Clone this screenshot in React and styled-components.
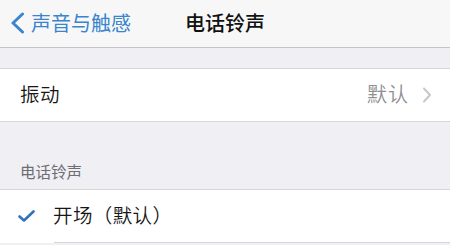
import React from "react";
import styled, { createGlobalStyle } from "styled-components";

const Global = createGlobalStyle`
  html, body { margin: 0; padding: 0; background: #efeff4; }
  body { font-family: "Noto Sans CJK SC", "Noto Sans", sans-serif; -webkit-font-smoothing: antialiased; }
`;

const Page = styled.div`
  width: 450px;
  height: 245px;
  overflow: hidden;
  background: #efeff4;
`;

const NavBar = styled.div`
  height: 47px;
  background: #f7f7f8;
  border-bottom: 1px solid #c4c4c8;
  display: grid;
  grid-template-columns: 1fr auto 1fr;
  align-items: center;
`;

const Back = styled.div`
  display: flex;
  align-items: center;
  gap: 6px;
  padding-left: 9px;
  color: #3a85cc;
  font-size: 20px;
  line-height: 1;
  margin-top: -2px;
`;

const Title = styled.div`
  font-size: 20px;
  font-weight: 500;
  color: #111;
  margin-top: -3px;
`;

const Spacer = styled.div`
  height: ${p => p.h}px;
`;

const Group = styled.div`
  background: #fff;
  border-top: 1px solid #d6d6da;
  border-bottom: ${p => (p.open ? "none" : "1px solid #d6d6da")};
`;

const Row = styled.div`
  height: 52px;
  box-sizing: border-box;
  display: flex;
  align-items: center;
  padding: 0 18px 3px 20px;
  font-size: 19.5px;
  font-weight: 350;
  color: #161616;
`;

const Label = styled.div`
  flex: 1;
  letter-spacing: 0.4px;
`;

const Value = styled.div`
  color: #8e8e93;
  font-size: 20px;
  letter-spacing: 1px;
  margin-right: 13px;
`;

const Chevron = styled.svg`
  margin-top: 3px;
`;

const SectionHeader = styled.div`
  height: 67px;
  box-sizing: border-box;
  display: flex;
  align-items: flex-end;
  padding: 0 0 7px 20px;
  font-size: 15.5px;
  color: #6d6d72;
`;

const CheckWrap = styled.div`
  width: 35px;
  display: flex;
  align-items: center;
  margin-left: -2px;
  margin-top: 3px;
`;

const Inset = styled.div`
  height: 1px;
  margin-left: 54px;
  background: #d6d6da;
`;

export default function App() {
  return (
    <Page>
      <Global />
      <NavBar>
        <Back>
          <svg width="16" height="22" viewBox="0 0 16 22">
            <path d="M13.5 2 L4 11 L13.5 20" fill="none" stroke="#3a85cc" strokeWidth="3" strokeLinecap="round" strokeLinejoin="round" />
          </svg>
          <span>声音与触感</span>
        </Back>
        <Title>电话铃声</Title>
        <div />
      </NavBar>
      <Spacer h={20} />
      <Group>
        <Row>
          <Label>振动</Label>
          <Value>默认</Value>
          <Chevron width="10" height="16" viewBox="0 0 10 16">
            <path d="M2 1.5 L8 8 L2 14.5" fill="none" stroke="#c7c7cc" strokeWidth="2" strokeLinecap="round" strokeLinejoin="round" />
          </Chevron>
        </Row>
      </Group>
      <SectionHeader>电话铃声</SectionHeader>
      <Group open>
        <Row>
          <CheckWrap>
            <svg width="17" height="12" viewBox="0 0 17 12">
              <path d="M1.5 6.5 L6 10.5 L15.5 1.5" fill="none" stroke="#2f74bb" strokeWidth="2.6" strokeLinecap="round" strokeLinejoin="round" />
            </svg>
          </CheckWrap>
          <Label>开场（默认）</Label>
        </Row>
        <Inset />
      </Group>
    </Page>
  );
}
